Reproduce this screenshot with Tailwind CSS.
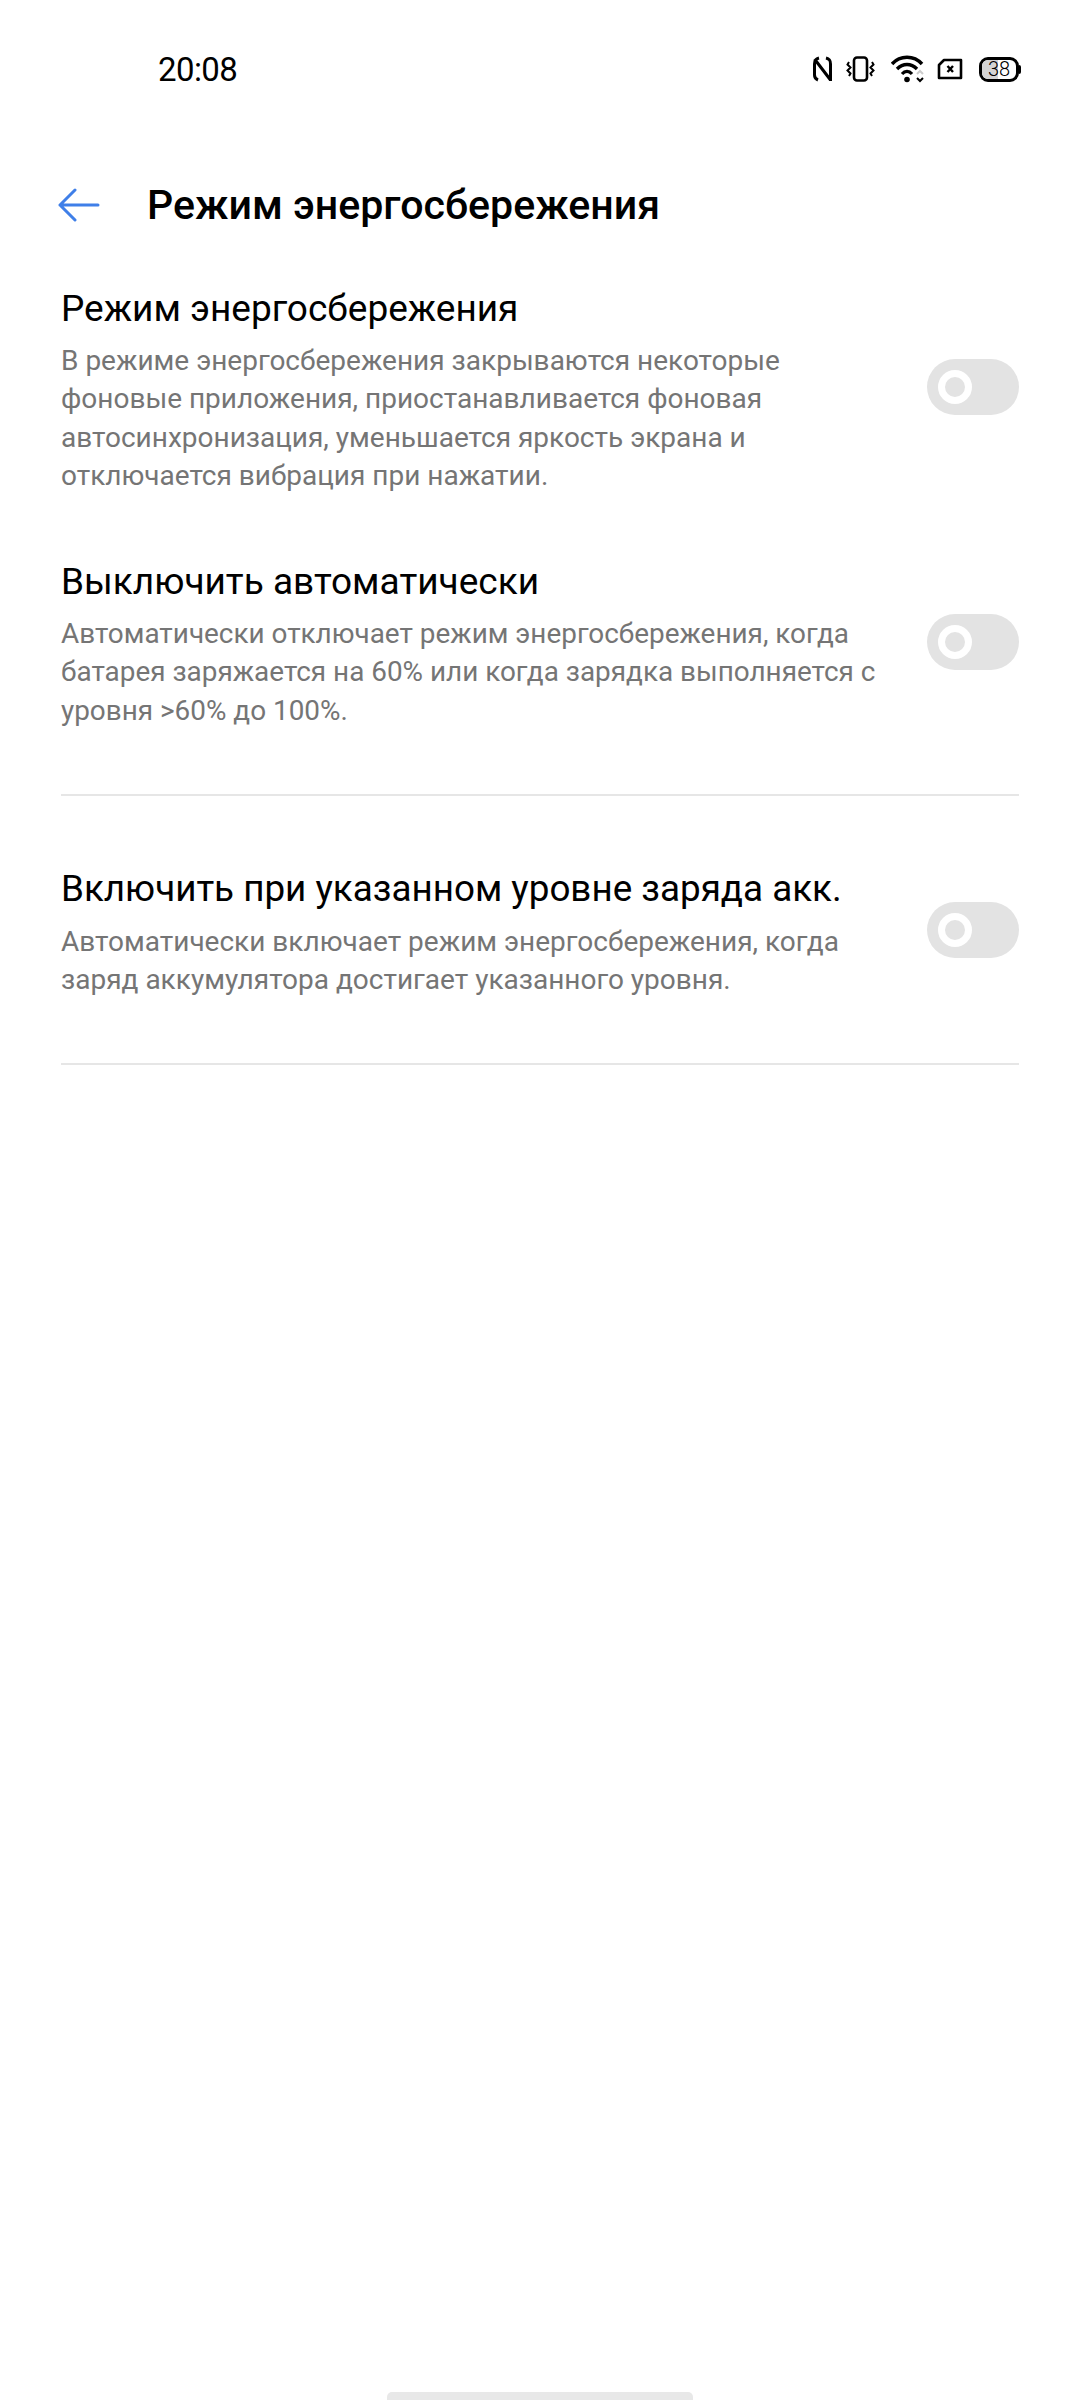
<!doctype html>
<html lang="ru"><head><meta charset="utf-8"><script src="https://cdn.jsdelivr.net/npm/@tailwindcss/browser@4"></script></head>
<body class="bg-white">
<div class="relative w-[1080px] h-[2400px] overflow-hidden bg-white font-['Roboto',sans-serif] text-black">
  <div class="h-[140px] pl-[158px] pr-[59px] flex items-start justify-between pt-[50px]">
    <span class="text-[33px] leading-[40px] tracking-[-0.6px]">20:08</span>
    <div class="flex items-center h-[38px]">
      <svg width="19" height="26" viewBox="0 0 19 26" fill="none" stroke="#000" stroke-width="3"><path d="M6 2 C2 3 1.500 5 1.500 8 V19 C1.500 21 2.500 23 5 24 M1.500 3 L17.500 24 M13 2 C17 3 17.500 5 17.500 8 V25"/></svg>
      <svg width="29" height="26" viewBox="0 0 29 26" fill="none" stroke="#000" class="ml-[14px]"><rect x="8" y="1.500" width="13" height="23" rx="3" stroke-width="2.600"/><path d="M3 6 l-1.500 2.500 l3 3 l-3 3 l3 3 l-1.500 2.500 M26 6 l1.500 2.500 l-3 3 l3 3 l-3 3 l1.500 2.500" stroke-width="2"/></svg>
      <svg width="34" height="28" viewBox="0 0 34 28" fill="none" class="ml-[16px]"><path d="M1 9 C9 0 23 0 31 9" stroke="#000" stroke-width="3.400"/><path d="M6 14 C12 8 20 8 26 14" stroke="#000" stroke-width="3.400"/><path d="M11 19 C14 15.500 18 15.500 21 19" stroke="#000" stroke-width="3.200"/><circle cx="16" cy="24.500" r="2.800" fill="#000"/><path d="M26 19 l3-3 l3 3" stroke="#ccc" stroke-width="2"/><path d="M26 23 l3 3 l3-3" stroke="#000" stroke-width="2"/></svg>
      <svg width="26" height="22" viewBox="0 0 26 22" fill="none" class="ml-[12px]"><path d="M7 2 H24 V20 H2 V7 Z" stroke="#000" stroke-width="2.600" stroke-linejoin="round"/><path d="M10.500 8 l5.500 6 M16 8 l-5.500 6" stroke="#000" stroke-width="2.400"/></svg>
      <div class="relative ml-[16px] w-[40px] h-[25px] rounded-[9px] border-[3px] border-black overflow-hidden flex items-center justify-center">
        <div class="absolute left-0 top-0 bottom-0 w-[16px] bg-[#d4d4d4]"></div>
        <span class="relative text-[20px] leading-none font-light">38</span>
      </div>
      <div class="w-[2px] h-[9px] rounded-r-[2px] bg-black"></div>
    </div>
  </div>

  <div class="h-[130px] pl-[58px] flex items-center">
    <svg width="42" height="34" viewBox="0 0 42 34" fill="none" stroke="#3f7fe8" stroke-width="3" stroke-linecap="round" stroke-linejoin="round"><path d="M40 17 H2 M17 2 L2 17 L17 32"/></svg>
    <h1 class="ml-[47px] text-[41.100px] leading-[48px] font-medium">Режим энергосбережения</h1>
  </div>

  <div class="px-[61px]">
    <div class="flex items-center justify-between mt-[14px]">
      <div class="w-[800px]">
        <div class="text-[37px] leading-[50px]">Режим энергосбережения</div>
        <p class="mt-[8px] text-[28px] leading-[38.400px] text-[#757575]">В режиме энергосбережения закрываются некоторые<br>фоновые приложения, приостанавливается фоновая<br>автосинхронизация, уменьшается яркость экрана и<br>отключается вибрация при нажатии.</p>
      </div>
      <div class="w-[92px] h-[56px] mb-[6px] rounded-full bg-[#e3e3e3] flex items-center pl-[11px]"><div class="w-[34px] h-[34px] rounded-full border-[7px] border-white"></div></div>
    </div>
    <div class="flex items-center justify-between mt-[61px]">
      <div class="w-[830px]">
        <div class="text-[37px] leading-[50px]">Выключить автоматически</div>
        <p class="mt-[8px] text-[27.900px] leading-[38.800px] text-[#757575]">Автоматически отключает режим энергосбережения, когда<br>батарея заряжается на 60% или когда зарядка выполняется с<br>уровня &gt;60% до 100%.</p>
      </div>
      <div class="w-[92px] h-[56px] mb-[4px] rounded-full bg-[#e3e3e3] flex items-center pl-[11px]"><div class="w-[34px] h-[34px] rounded-full border-[7px] border-white"></div></div>
    </div>
    <div class="h-[2px] bg-[#e6e6e6] mt-[63px]"></div>
    <div class="flex items-center justify-between mt-[68px]">
      <div class="w-[830px]">
        <div class="text-[36.800px] leading-[50px]">Включить при указанном уровне заряда акк.</div>
        <p class="mt-[9px] text-[28px] leading-[38.400px] text-[#757575]">Автоматически включает режим энергосбережения, когда<br>заряд аккумулятора достигает указанного уровня.</p>
      </div>
      <div class="w-[92px] h-[56px] mb-[4px] rounded-full bg-[#e3e3e3] flex items-center pl-[11px]"><div class="w-[34px] h-[34px] rounded-full border-[7px] border-white"></div></div>
    </div>
    <div class="h-[2px] bg-[#e6e6e6] mt-[63px]"></div>
  </div>
  <div class="absolute left-[387px] bottom-0 w-[306px] h-[8px] rounded-t-[5px] bg-[#e8e8e8]"></div>
</div>
</body></html>
